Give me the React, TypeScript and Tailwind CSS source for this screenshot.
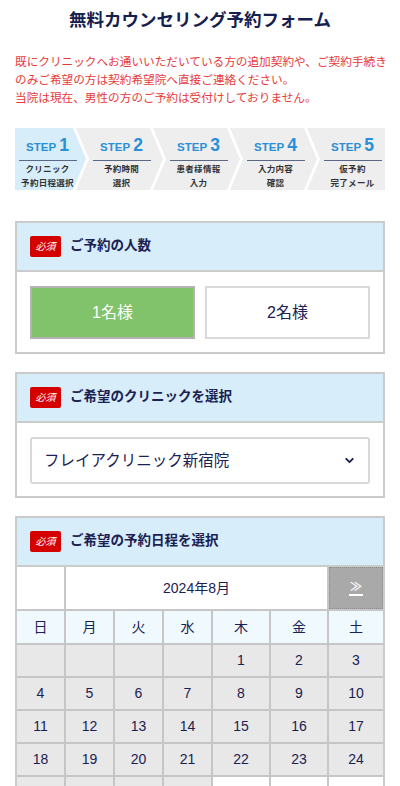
import { ChevronDown } from "lucide-react";

const STEPS = [
  { n: 1, a: "クリニック", b: "予約日程選択" },
  { n: 2, a: "予約時間", b: "選択" },
  { n: 3, a: "患者様情報", b: "入力" },
  { n: 4, a: "入力内容", b: "確認" },
  { n: 5, a: "仮予約", b: "完了メール" },
];

const WEEK = ["日", "月", "火", "水", "木", "金", "土"];

const clipFor = (i: number) => {
  if (i === 0) return "[clip-path:polygon(0_0,calc(100%_-_13px)_0,100%_50%,calc(100%_-_13px)_100%,0_100%)]";
  if (i === 4) return "[clip-path:polygon(0_0,100%_0,100%_100%,0_100%,13px_50%)]";
  return "[clip-path:polygon(0_0,calc(100%_-_13px)_0,100%_50%,calc(100%_-_13px)_100%,0_100%,13px_50%)]";
};

function Required() {
  return (
    <span className="flex h-[21px] w-[31px] items-center justify-center rounded-[2px] bg-[#d50000] text-[10px] italic text-white [font-family:'Liberation_Serif','Noto_Sans_CJK_JP',serif]">
      必須
    </span>
  );
}

function SectionHeader({ title }: { title: string }) {
  return (
    <div className="flex h-[49px] items-center gap-[9px] border-b-2 border-[#cbcbcb] bg-[#d7eefa] px-[13px]">
      <Required />
      <span className="text-[13.5px] font-bold text-[#1b2152]">{title}</span>
    </div>
  );
}

export default function App() {
  const cells: (number | null)[] = [null, null, null, null];
  for (let d = 1; d <= 31; d++) cells.push(d);

  return (
    <div className="w-[400px] bg-white px-[15px] pb-10 [font-family:'Liberation_Sans','Noto_Sans_CJK_JP',sans-serif]">
      <h1 className="pt-[7px] text-center text-[17.5px] font-bold leading-[26px] text-[#15204e]">
        無料カウンセリング予約フォーム
      </h1>

      <div className="mt-[20px] text-[11.65px] leading-[18px] text-[#e63a3a] whitespace-nowrap">
        <p>既にクリニックへお通いいただいている方の追加契約や、ご契約手続き</p>
        <p>のみご希望の方は契約希望院へ直接ご連絡ください。</p>
        <p>当院は現在、男性の方のご予約は受付けしておりません。</p>
      </div>

      <div className="mt-[21px] flex h-[62px]">
        {STEPS.map((s, i) => (
          <div
            key={s.n}
            className={`flex flex-1 flex-col items-center ${i > 0 ? "-ml-[10px]" : ""} ${
              i === 0 ? "bg-[#d7eefa] pr-[6px]" : i === 4 ? "bg-[#eeeeee] pl-[13px]" : "bg-[#eeeeee] pl-[13px] pr-[9px]"
            } ${clipFor(i)}`}
          >
            <div className="mt-[7px] flex items-baseline gap-[3px] text-[#2a8fd6] font-bold">
              <span className="text-[11.5px]">STEP</span>
              <span className="text-[17.5px] leading-[20px]">{s.n}</span>
            </div>
            <div className="mt-[4px] h-[2px] w-[58px] bg-[#5a6886]" />
            <div className="mt-[1px] text-center text-[8.5px] font-bold leading-[14px] tracking-[0.3px] text-[#333]">
              <p>{s.a}</p>
              <p>{s.b}</p>
            </div>
          </div>
        ))}
      </div>

      <section className="mt-[31px] border-2 border-[#cbcbcb]">
        <SectionHeader title="ご予約の人数" />
        <div className="flex gap-[10px] px-[13px] pb-[13px] pt-[14px]">
          <button className="flex h-[53px] flex-1 items-center justify-center border-2 border-[#b3b3b3] bg-[#80c36a] text-[16px] text-white">
            1名様
          </button>
          <button className="flex h-[53px] flex-1 items-center justify-center border-2 border-[#dadada] bg-white text-[16px] text-[#1b2152]">
            2名様
          </button>
        </div>
      </section>

      <section className="mt-[18px] border-2 border-[#cbcbcb]">
        <SectionHeader title="ご希望のクリニックを選択" />
        <div className="px-[13px] pb-[12px] pt-[14px]">
          <div className="flex h-[47px] items-center justify-between rounded-[3px] border-2 border-[#d8d8d8] pl-[12px] pr-[12px]">
            <span className="text-[15.5px] text-[#1b2152]">フレイアクリニック新宿院</span>
            <ChevronDown className="h-[13px] w-[13px] text-[#1b2152]" strokeWidth={3.5} />
          </div>
        </div>
      </section>

      <section className="mt-[18px] border-2 border-[#cbcbcb]">
        <SectionHeader title="ご希望の予約日程を選択" />
        <div className="grid grid-cols-[47px_47px_47px_47px_56px_56px_1fr] gap-[2px] bg-[#c6c6c6]">
          <div className="h-[42px] bg-white" />
          <div className="col-span-5 flex h-[42px] items-center justify-center bg-white text-[14px] text-[#1b2152]">
            2024年8月
          </div>
          <div className="flex h-[42px] items-center justify-center border border-dotted border-[#8c8c8c] bg-[#a9a9a9]">
            <span className="border-b-2 border-white px-[1px] text-[12px] font-bold leading-[13px] text-white">≫</span>
          </div>
          {WEEK.map((w) => (
            <div key={w} className="flex h-[32px] items-center justify-center bg-[#f0fafe] text-[14px] text-[#1b2152]">
              {w}
            </div>
          ))}
          {cells.map((d, i) => (
            <div
              key={i}
              className={`flex h-[31px] items-center justify-center text-[14px] text-[#1b2152] ${
                d !== null && d >= 29 ? "bg-white" : "bg-[#e8e8e8]"
              }`}
            >
              {d ?? ""}
            </div>
          ))}
        </div>
      </section>
    </div>
  );
}
